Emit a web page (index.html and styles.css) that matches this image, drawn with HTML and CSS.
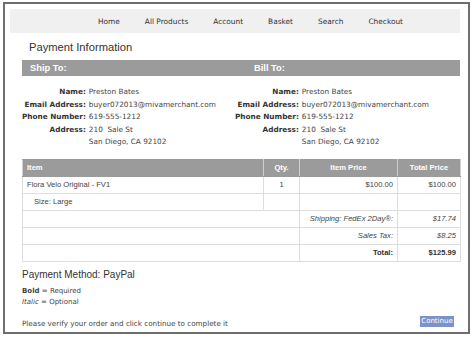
FILE: index.html
```html
<html>

<head>
  <link rel="stylesheet" href="styles.css">
  <title>
    Payment Information
  </title>
</head>

<body>
  <div class="frame">
    <div class="nav">
      <span>Home</span>
      <span>All Products</span>
      <span>Account</span>
      <span>Basket</span>
      <span>Search</span>
      <span>Checkout</span>
    </div>
    <div class="content">
      <div class="title">Payment Information</div>
      <div class="bar">
        <span>Ship To:</span>
        <span>Bill To:</span>
      </div>
      <div class="addresses">
        <div class="addr">
          <b>Name:</b><span>Preston Bates</span>
          <b>Email Address:</b><span>buyer072013@mivamerchant.com</span>
          <b>Phone Number:</b><span>619-555-1212</span>
          <b>Address:</b><span>210&nbsp; Sale St</span>
          <b></b><span>San Diego, CA 92102</span>
        </div>
        <div class="addr">
          <b>Name:</b><span>Preston Bates</span>
          <b>Email Address:</b><span>buyer072013@mivamerchant.com</span>
          <b>Phone Number:</b><span>619-555-1212</span>
          <b>Address:</b><span>210&nbsp; Sale St</span>
          <b></b><span>San Diego, CA 92102</span>
        </div>
      </div>
      <table class="basket">
        <colgroup>
          <col class="c-item">
          <col class="c-qty">
          <col class="c-price">
          <col class="c-total">
        </colgroup>
        <tr class="head">
          <th class="left">Item</th>
          <th>Qty.</th>
          <th>Item Price</th>
          <th>Total Price</th>
        </tr>
        <tr>
          <td>Flora Velo Original - FV1</td>
          <td class="center">1</td>
          <td class="right">$100.00</td>
          <td class="right">$100.00</td>
        </tr>
        <tr>
          <td class="opt">Size: Large</td>
          <td></td>
          <td></td>
          <td></td>
        </tr>
        <tr>
          <td colspan="2"></td>
          <td class="right"><i>Shipping: FedEx 2Day®:</i></td>
          <td class="right"><i>$17.74</i></td>
        </tr>
        <tr>
          <td colspan="2"></td>
          <td class="right"><i>Sales Tax:</i></td>
          <td class="right"><i>$8.25</i></td>
        </tr>
        <tr>
          <td colspan="2"></td>
          <td class="right"><b>Total:</b></td>
          <td class="right"><b>$125.99</b></td>
        </tr>
      </table>
      <div class="method">Payment Method: PayPal</div>
      <div class="legend">
        <div><b>Bold</b> = Required</div>
        <div><i>Italic</i> = Optional</div>
      </div>
      <div class="footer">
        <span>Please verify your order and click continue to complete it</span>
        <span class="btn">Continue</span>
      </div>
    </div>
  </div>
</body>

</html>
```

FILE: styles.css
```css
body {
  margin: 0;
  background: #ffffff;
  font-family: 'DejaVu Sans', Verdana, sans-serif;
  color: #333333;
}

.frame {
  margin: 2px 4px 0 3px;
  height: 328px;
  border: 2px solid #6e6e6e;
  overflow: hidden;
}

.nav {
  margin: 5px 8px 0 5px;
  height: 24px;
  background: #f0f0f0;
  display: flex;
  align-items: center;
  gap: 25px;
  padding-left: 88px;
  font-size: 7.4px;
  color: #333333;
}

.content {
  padding-left: 17px;
  padding-right: 8px;
}

.title {
  margin-top: 7px;
  padding-left: 7px;
  height: 14px;
  line-height: 14px;
  font-family: 'Liberation Sans', Arial, sans-serif;
  font-size: 11.2px;
  color: #333333;
}

.bar {
  margin-top: 6px;
  height: 16px;
  background: #9b9b9b;
  display: flex;
  align-items: center;
  font-family: 'Liberation Sans', Arial, sans-serif;
  font-weight: bold;
  font-size: 9.3px;
  color: #ffffff;
}

.bar span {
  padding-left: 8px;
}

.bar span:first-child {
  width: 216px;
}

.addresses {
  margin-top: 10px;
  display: grid;
  grid-template-columns: 213px 1fr;
  font-size: 7.3px;
  line-height: 12.5px;
}

.addr {
  display: grid;
  grid-template-columns: auto auto;
  justify-content: start;
  column-gap: 3px;
}

.addr b {
  text-align: right;
  color: #333333;
}

.addr span {
  color: #444444;
}

.basket {
  margin-top: 10px;
  width: 438px;
  table-layout: fixed;
  border-collapse: collapse;
  font-family: 'Liberation Sans', Arial, sans-serif;
  font-size: 7.6px;
  color: #444444;
}

.c-item {
  width: 241px;
}

.c-qty {
  width: 36px;
}

.c-price {
  width: 98px;
}

.c-total {
  width: 63px;
}

.basket th,
.basket td {
  height: 17px;
  padding: 0 4px;
  border: 1px solid #dddddd;
}

.basket th {
  background: #9b9b9b;
  color: #ffffff;
  font-weight: bold;
  border-color: #9b9b9b #cfcfcf;
}

.basket th.left {
  text-align: left;
}

.basket td.center {
  text-align: center;
}

.basket td.right {
  text-align: right;
}

.basket td.opt {
  padding-left: 11px;
}

.basket td b {
  color: #333333;
}

.method {
  margin-top: 6px;
  line-height: 13px;
  font-family: 'Liberation Sans', Arial, sans-serif;
  font-size: 10px;
  color: #333333;
}

.legend {
  margin-top: 5px;
  font-size: 7px;
  line-height: 11px;
  color: #444444;
}

.footer {
  margin-top: 10px;
  margin-right: 6px;
  display: flex;
  justify-content: space-between;
  align-items: flex-start;
  font-size: 7.2px;
  line-height: 11px;
  color: #444444;
}

.btn {
  margin-top: -2px;
  width: 34px;
  height: 11px;
  line-height: 11px;
  text-align: center;
  background: #7b93c8;
  color: #ffffff;
  font-size: 7px;
}
```
